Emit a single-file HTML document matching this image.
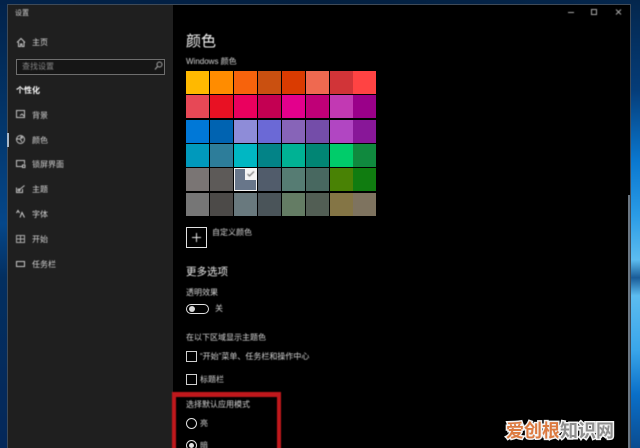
<!DOCTYPE html>
<html lang="zh"><head><meta charset="utf-8"><title>设置</title>
<style>
html,body{margin:0;padding:0;width:640px;height:448px;overflow:hidden;background:#04254a}
body{position:relative;font-family:"Liberation Sans","Noto Sans CJK SC",sans-serif;color:#e6e6e6}
#bgl{position:absolute;left:0;top:0;width:8px;height:448px;background:linear-gradient(#02224a 0,#03386e 30%,#05478a 50%,#032f60 62%,#04285a 100%)}
#bgt{position:absolute;left:0;top:0;width:640px;height:5px;background:linear-gradient(90deg,#02224a,#031f3f 50%,#04264c)}
#bgr{position:absolute;left:630px;top:0;width:10px;height:448px;background:linear-gradient(#04264c 0,#053c78 20%,#0a78d0 36%,#2a9be6 48%,#5cbcf0 58%,#1a5c98 62%,#5cbcf0 66%,#3aa6ea 78%,#0a6fc8 88%,#0a4c90 100%)}
#win{position:absolute;left:7px;top:4px;width:624px;height:444px;background:#000;border:1px solid #3e4a58;border-bottom:0;box-sizing:border-box}
#side{position:absolute;left:8px;top:5px;width:165px;height:443px;background:#1f1f1f}
.t{position:absolute;white-space:nowrap;font-size:8px;line-height:10px;color:#d4d4d4;filter:blur(.4px)}
.ic{position:absolute;filter:blur(.4px)}
.sw{position:absolute;width:23px;height:23px}
.box{position:absolute;width:9px;height:9px;border:1px solid #d0d0d0;filter:blur(.25px)}
</style></head><body>
<div id="bgl"></div><div id="bgt"></div><div id="bgr"></div>
<div id="win"></div><div id="side"></div>
<div style="position:absolute;left:7px;top:133px;width:2px;height:14px;background:#a8b8c8"></div>
<div style="position:absolute;left:628px;top:195px;width:2px;height:253px;background:#6a7682"></div>

<div class="t" style="left:15px;top:9px;font-size:7px">设置</div>
<svg class="ic" style="left:566px;top:8px" width="60" height="9" fill="none" stroke="#a8a8a8" stroke-width="1"><path d="M2 4.500H8"/><path d="M25.500 1.500H30.500V6.500H25.500z"/><path d="M50 1.500L55 6.500M55 1.500L50 6.500"/></svg>

<svg class="ic" style="left:16px;top:37px" width="11" height="11" fill="none" stroke="#c8c8c8"><path d="M1 5.500L5 1.500L9 5.500M2.500 5V9.500H4.500V7H6V9.500H8V5"/></svg>
<div class="t" style="left:32px;top:38px">主页</div>
<div style="position:absolute;left:16px;top:59px;width:147px;height:14px;border:1px solid #6e6e6e;background:#161616"></div>
<div class="t" style="left:22px;top:62px;color:#868686">查找设置</div>
<svg class="ic" style="left:154px;top:61px" width="10" height="10" fill="none" stroke="#a8a8a8"><circle cx="5.500" cy="3.500" r="2.500"/><path d="M3.500 5.500L1 8.500"/></svg>
<div class="t" style="left:16px;top:86px;font-weight:bold;color:#fff">个性化</div>

<svg class="ic" style="left:15px;top:109px" width="11" height="10" fill="none" stroke="#c4c4c4"><path d="M1.500 1.500H9.500V8.500H1.500z"/><path d="M5 6.500L7 5L9 7"/></svg>
<div class="t" style="left:32px;top:111px">背景</div>
<svg class="ic" style="left:15px;top:134px" width="11" height="11" fill="none" stroke="#c4c4c4"><circle cx="5.500" cy="5.500" r="4"/><path d="M2 5H5L7 8"/><circle cx="6.500" cy="3.500" r=".8"/></svg>
<div class="t" style="left:32px;top:136px">颜色</div>
<svg class="ic" style="left:15px;top:159px" width="11" height="10" fill="none" stroke="#c4c4c4"><path d="M7 7.500H1.500V1.500H9.500V5"/><path d="M7.500 6H10V8.500H7.500z"/></svg>
<div class="t" style="left:32px;top:160px">锁屏界面</div>
<svg class="ic" style="left:15px;top:184px" width="11" height="10" fill="none" stroke="#c4c4c4"><path d="M1.500 3.500V8.500H7.500V5"/><path d="M4 6L9.500 1.500"/><circle cx="4" cy="6" r="1"/></svg>
<div class="t" style="left:32px;top:185px">主题</div>
<svg class="ic" style="left:15px;top:209px" width="11" height="10" fill="none" stroke="#d0d0d0"><path d="M1.500 4L3 1.500L4.500 4M5 8.500L7 3.500L9.500 8.500"/></svg>
<div class="t" style="left:32px;top:210px">字体</div>
<svg class="ic" style="left:15px;top:234px" width="11" height="10" fill="none" stroke="#aaa"><path d="M1.500 1.500H9.500V8.500H1.500zM5.500 1.500V8.500M1.500 5H9.500"/></svg>
<div class="t" style="left:32px;top:235px">开始</div>
<svg class="ic" style="left:15px;top:259px" width="11" height="10" fill="none" stroke="#c8c8c8"><path d="M1.500 2.500H9.500V7.500H1.500z"/></svg>
<div class="t" style="left:32px;top:260px">任务栏</div>

<div class="t" style="left:186px;top:32px;font-size:15px;line-height:20px;color:#f4f4f4">颜色</div>
<div class="t" style="left:186px;top:57px">Windows 颜色</div>

<div class="sw" style="left:186px;top:71px;background:#FFB900"></div><div class="sw" style="left:210px;top:71px;background:#FF8C00"></div><div class="sw" style="left:234px;top:71px;background:#F7630C"></div><div class="sw" style="left:258px;top:71px;background:#CA5010"></div><div class="sw" style="left:282px;top:71px;background:#DA3B01"></div><div class="sw" style="left:306px;top:71px;background:#EF6950"></div><div class="sw" style="left:330px;top:71px;background:#D13438"></div><div class="sw" style="left:353px;top:71px;background:#FF4343"></div>
<div class="sw" style="left:186px;top:95px;background:#E74856"></div><div class="sw" style="left:210px;top:95px;background:#E81123"></div><div class="sw" style="left:234px;top:95px;background:#EA005E"></div><div class="sw" style="left:258px;top:95px;background:#C30052"></div><div class="sw" style="left:282px;top:95px;background:#E3008C"></div><div class="sw" style="left:306px;top:95px;background:#BF0077"></div><div class="sw" style="left:330px;top:95px;background:#C239B3"></div><div class="sw" style="left:353px;top:95px;background:#9A0089"></div>
<div class="sw" style="left:186px;top:120px;background:#0078D7"></div><div class="sw" style="left:210px;top:120px;background:#0063B1"></div><div class="sw" style="left:234px;top:120px;background:#8E8CD8"></div><div class="sw" style="left:258px;top:120px;background:#6B69D6"></div><div class="sw" style="left:282px;top:120px;background:#8764B8"></div><div class="sw" style="left:306px;top:120px;background:#744DA9"></div><div class="sw" style="left:330px;top:120px;background:#B146C2"></div><div class="sw" style="left:353px;top:120px;background:#881798"></div>
<div class="sw" style="left:186px;top:144px;background:#0099BC"></div><div class="sw" style="left:210px;top:144px;background:#2D7D9A"></div><div class="sw" style="left:234px;top:144px;background:#00B7C3"></div><div class="sw" style="left:258px;top:144px;background:#038387"></div><div class="sw" style="left:282px;top:144px;background:#00B294"></div><div class="sw" style="left:306px;top:144px;background:#018574"></div><div class="sw" style="left:330px;top:144px;background:#00CC6A"></div><div class="sw" style="left:353px;top:144px;background:#10893E"></div>
<div class="sw" style="left:186px;top:168px;background:#7A7574"></div><div class="sw" style="left:210px;top:168px;background:#5D5A58"></div><div class="sw" style="left:234px;top:168px;background:#68768A;box-sizing:border-box;border:1.500px solid #f0f0f0"></div><div class="sw" style="left:258px;top:168px;background:#515C6B"></div><div class="sw" style="left:282px;top:168px;background:#567C73"></div><div class="sw" style="left:306px;top:168px;background:#486860"></div><div class="sw" style="left:330px;top:168px;background:#498205"></div><div class="sw" style="left:353px;top:168px;background:#107C10"></div>
<div class="sw" style="left:186px;top:193px;background:#767676"></div><div class="sw" style="left:210px;top:193px;background:#4C4A48"></div><div class="sw" style="left:234px;top:193px;background:#69797E"></div><div class="sw" style="left:258px;top:193px;background:#4A5459"></div><div class="sw" style="left:282px;top:193px;background:#647C64"></div><div class="sw" style="left:306px;top:193px;background:#525E54"></div><div class="sw" style="left:330px;top:193px;background:#847545"></div><div class="sw" style="left:353px;top:193px;background:#7E735F"></div>
<div style="position:absolute;left:245px;top:168px;width:12px;height:12px;background:#f4f4f4"></div>
<svg class="ic" style="left:246px;top:170px" width="10" height="8" fill="none" stroke="#666"><path d="M1.500 4L3.500 6L8 1.500"/></svg>

<div style="position:absolute;left:186px;top:227px;width:19px;height:19px;border:1px solid #e0e0e0"></div>
<svg class="ic" style="left:190px;top:231px" width="13" height="13" fill="none" stroke="#e8e8e8"><path d="M6.500 2V11M2 6.500H11"/></svg>
<div class="t" style="left:212px;top:228px">自定义颜色</div>

<div class="t" style="left:186px;top:265px;font-size:10.500px;line-height:14px;color:#e8e8e8">更多选项</div>
<div class="t" style="left:186px;top:288px">透明效果</div>
<div style="position:absolute;left:186px;top:304px;width:21px;height:8px;border:1px solid #e0e0e0;border-radius:6px;filter:blur(.25px)"></div>
<div style="position:absolute;left:189px;top:306px;width:6px;height:6px;border-radius:50%;background:#d8d8d8"></div>
<div class="t" style="left:215px;top:304px">关</div>
<div class="t" style="left:186px;top:333px">在以下区域显示主题色</div>
<div class="box" style="left:186px;top:351px"></div>
<div class="t" style="left:200px;top:352px">“开始”菜单、任务栏和操作中心</div>
<div class="box" style="left:186px;top:374px"></div>
<div class="t" style="left:200px;top:375px">标题栏</div>

<div style="position:absolute;left:172px;top:392px;width:109px;height:70px;box-sizing:border-box;border:4px solid #c0181c;border-top-width:5px;filter:blur(.4px)"></div>
<div class="t" style="left:186px;top:400px">选择默认应用模式</div>
<div style="position:absolute;left:186px;top:418px;width:9px;height:9px;border:1px solid #e0e0e0;border-radius:50%;filter:blur(.25px)"></div>
<div class="t" style="left:200px;top:419px">亮</div>
<div style="position:absolute;left:186px;top:440px;width:9px;height:9px;border:1px solid #e0e0e0;border-radius:50%;filter:blur(.25px)"></div>
<div style="position:absolute;left:188.500px;top:442.500px;width:5px;height:5px;border-radius:50%;background:#e0e0e0"></div>
<div class="t" style="left:200px;top:441px">暗</div>

<div style="position:absolute;left:506px;top:419px;font-size:18px;line-height:22px;white-space:nowrap;font-weight:bold;-webkit-text-stroke:3px #f4f4f4;paint-order:stroke fill;font-family:'Noto Sans CJK SC',sans-serif;filter:blur(.3px)"><span style="color:#dc7a40">爱创根</span><span style="color:#8f8f8f">知识网</span></div>
</body></html>
